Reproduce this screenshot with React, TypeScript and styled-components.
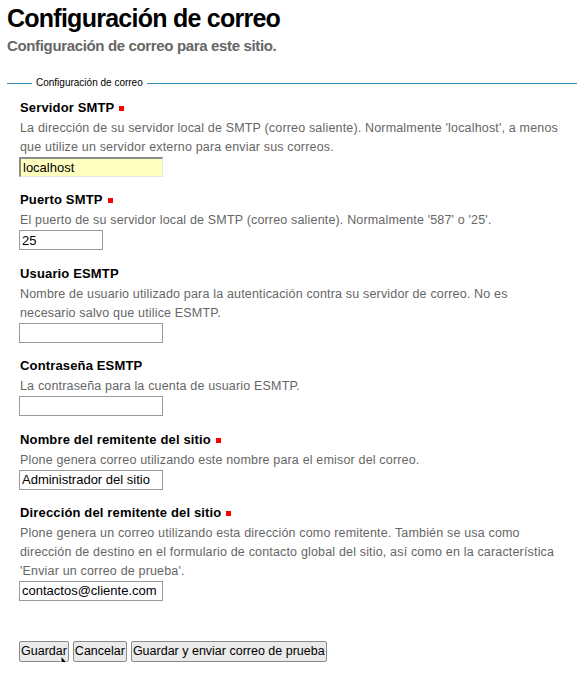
import React from 'react';
import styled, { createGlobalStyle } from 'styled-components';

const GlobalStyle = createGlobalStyle`
  html, body {
    margin: 0;
    padding: 0;
    background: #ffffff;
  }
  body {
    font-family: "Liberation Sans", Arial, sans-serif;
    color: #000;
  }
`;

const Page = styled.div`
  position: relative;
  padding: 3px 8px 0 7px;
  width: 585px;
  box-sizing: border-box;
`;

const Title = styled.h1`
  margin: 0;
  font-size: 25px;
  line-height: 30px;
  font-weight: bold;
  letter-spacing: -0.75px;
`;

const Subtitle = styled.p`
  margin: 3px 0 0;
  font-size: 15px;
  line-height: 20px;
  font-weight: bold;
  color: #666;
  letter-spacing: -0.35px;
`;

const Fieldset = styled.fieldset`
  margin: 21px 0 0;
  padding: 9px 0 0 13px;
  border: none;
  border-top: 1px solid #3c8dbc;
  min-width: 0;
`;

const Legend = styled.legend`
  padding: 0 4px;
  margin-left: 12px;
  font-size: 10px;
  line-height: 12px;
`;

const Field = styled.div`
  margin-bottom: 13.4px;
`;

const Label = styled.label`
  display: flex;
  align-items: center;
  gap: 5px;
  font-size: 13px;
  line-height: 19px;
  font-weight: bold;
  letter-spacing: 0.15px;
  margin-bottom: 2px;
`;

const Required = styled.span`
  display: inline-block;
  width: 5px;
  height: 5px;
  background: #f00;
  margin-top: 2px;
`;

const Help = styled.div`
  font-size: 12.5px;
  line-height: 19px;
  color: #666;
  letter-spacing: 0.17px;
  max-width: 546px;
`;

const Input = styled.input<{ $width: number; $focused?: boolean }>`
  display: block;
  box-sizing: border-box;
  width: ${(p) => p.$width}px;
  height: 20px;
  margin: 0 0 0 -1px;
  padding: 0 2px;
  font-family: "Liberation Sans", Arial, sans-serif;
  font-size: 13px;
  color: #000;
  background: ${(p) => (p.$focused ? '#ffffc0' : '#fff')};
  border-style: solid;
  border-width: ${(p) => (p.$focused ? '2px 1px 1px 2px' : '1px')};
  border-color: ${(p) =>
    p.$focused ? '#8c8c8c #e6e6e6 #e6e6e6 #8c8c8c' : '#999'};
  outline: none;
`;

const Actions = styled.div`
  display: flex;
  gap: 4px;
  margin: 40px 0 0 -1px;
`;

const Button = styled.button`
  height: 21px;
  padding: 0 1px;
  font-family: "Liberation Sans", Arial, sans-serif;
  font-size: 12.5px;
  color: #000;
  background: #eaeaea;
  border: 1px solid #8a8a8a;
  border-radius: 2px;
`;

const Cursor = styled.svg`
  position: absolute;
  left: 60px;
  top: 655px;
`;

type FieldDef = {
  label: string;
  required?: boolean;
  help: string;
  value: string;
  width: number;
  focused?: boolean;
};

const fields: FieldDef[] = [
  {
    label: 'Servidor SMTP',
    required: true,
    help: "La dirección de su servidor local de SMTP (correo saliente). Normalmente 'localhost', a menos que utilize un servidor externo para enviar sus correos.",
    value: 'localhost',
    width: 144,
    focused: true,
  },
  {
    label: 'Puerto SMTP',
    required: true,
    help: "El puerto de su servidor local de SMTP (correo saliente). Normalmente '587' o '25'.",
    value: '25',
    width: 84,
  },
  {
    label: 'Usuario ESMTP',
    help: 'Nombre de usuario utilizado para la autenticación contra su servidor de correo. No es necesario salvo que utilice ESMTP.',
    value: '',
    width: 144,
  },
  {
    label: 'Contraseña ESMTP',
    help: 'La contraseña para la cuenta de usuario ESMTP.',
    value: '',
    width: 144,
  },
  {
    label: 'Nombre del remitente del sitio',
    required: true,
    help: 'Plone genera correo utilizando este nombre para el emisor del correo.',
    value: 'Administrador del sitio',
    width: 144,
  },
  {
    label: 'Dirección del remitente del sitio',
    required: true,
    help: "Plone genera un correo utilizando esta dirección como remitente. También se usa como dirección de destino en el formulario de contacto global del sitio, así como en la característica 'Enviar un correo de prueba'.",
    value: 'contactos@cliente.com',
    width: 144,
  },
];

export default function App() {
  return (
    <Page>
      <GlobalStyle />
      <Title>Configuración de correo</Title>
      <Subtitle>Configuración de correo para este sitio.</Subtitle>
      <Fieldset>
        <Legend>Configuración de correo</Legend>
        {fields.map((f) => (
          <Field key={f.label}>
            <Label>
              {f.label}
              {f.required && <Required />}
            </Label>
            <Help>{f.help}</Help>
            <Input
              type={f.label.startsWith('Contraseña') ? 'password' : 'text'}
              defaultValue={f.value}
              $width={f.width}
              $focused={f.focused}
            />
          </Field>
        ))}
        <Actions>
          <Button>Guardar</Button>
          <Button>Cancelar</Button>
          <Button>Guardar y enviar correo de prueba</Button>
        </Actions>
      </Fieldset>
      <Cursor width="12" height="19" viewBox="0 0 12 19">
        <path d="M1 1 L1 15 L4 12 L7 18 L9 17 L6 11 L10 11 Z" fill="#000" stroke="#fff" strokeWidth="1" />
      </Cursor>
    </Page>
  );
}
